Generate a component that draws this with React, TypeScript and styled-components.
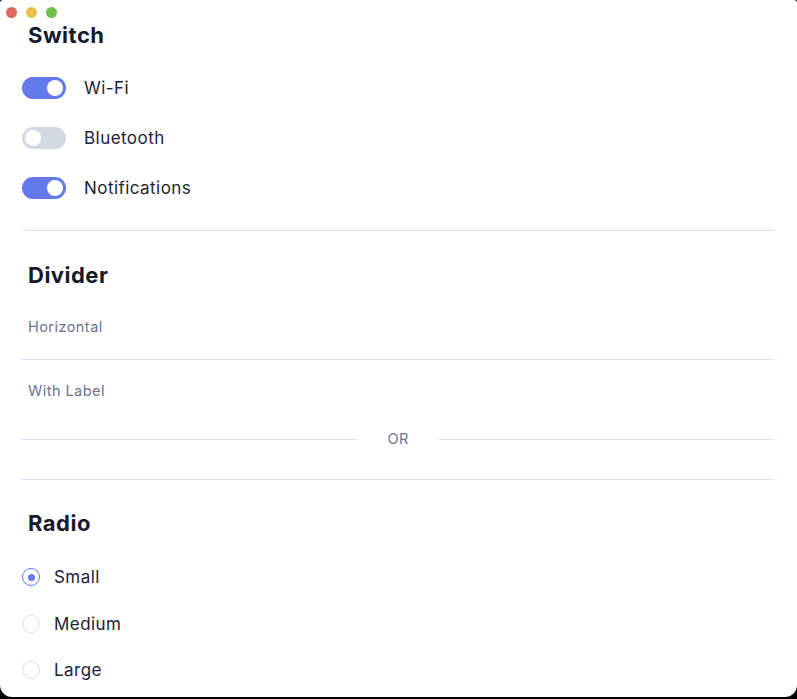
import { useState } from "react";
import styled, { createGlobalStyle } from "styled-components";

const GlobalStyle = createGlobalStyle`
  html, body {
    margin: 0;
    padding: 0;
    background: #000;
  }
  body {
    font-family: Inter, "Noto Sans", "Liberation Sans", sans-serif;
    -webkit-font-smoothing: antialiased;
  }
`;

const Window = styled.div`
  width: 797px;
  height: 697px;
  background: #fff;
  border-radius: 3px 3px 12px 12px;
  overflow: hidden;
  box-sizing: border-box;
`;

const TitleBar = styled.div`
  height: 21px;
  display: flex;
  align-items: center;
  gap: 9px;
  padding: 3px 0 0 6px;
  box-sizing: border-box;
`;

const Light = styled.span<{ $color: string }>`
  width: 11px;
  height: 11px;
  border-radius: 50%;
  background: ${(p) => p.$color};
`;

const Content = styled.div`
  padding: 0 23px 0 22px;
`;

const Section = styled.section`
  display: flex;
  flex-direction: column;
`;

const Heading = styled.h2`
  margin: 0 0 0 6px;
  font-size: 22px;
  line-height: 28px;
  font-weight: 700;
  letter-spacing: 0.5px;
  color: #161a2d;
`;

const SwitchList = styled.div`
  display: flex;
  flex-direction: column;
  gap: 28px;
  margin-top: 28px;
`;

const SwitchRow = styled.label`
  display: flex;
  align-items: center;
  gap: 18px;
  height: 22px;
  cursor: pointer;
`;

const Track = styled.span<{ $on: boolean }>`
  position: relative;
  width: 44px;
  height: 22px;
  border-radius: 11px;
  background: ${(p) => (p.$on ? "#6479ee" : "#d3d8e3")};
  flex-shrink: 0;
`;

const Thumb = styled.span<{ $on: boolean }>`
  position: absolute;
  top: 3px;
  left: ${(p) => (p.$on ? "25px" : "3px")};
  width: 16px;
  height: 16px;
  border-radius: 50%;
  background: #fff;
`;

const Label = styled.span`
  font-size: 17px;
  line-height: 22px;
  letter-spacing: 0.45px;
  color: #1e2233;
`;

const Rule = styled.hr<{ $top: number; $bottom: number }>`
  border: none;
  height: 1px;
  background: #dfdcef;
  margin: ${(p) => p.$top}px 0 ${(p) => p.$bottom}px;
`;

const SubLabel = styled.div<{ $top: number }>`
  margin: ${(p) => p.$top}px 0 0 6px;
  font-size: 14.5px;
  line-height: 20px;
  letter-spacing: 0.45px;
  color: #6b7390;
`;

const LabeledRule = styled.div`
  display: flex;
  align-items: center;
  margin-top: 28px;
  height: 20px;

  &::before,
  &::after {
    content: "";
    flex: 1;
    height: 1px;
    background: #dfdcef;
  }

  span {
    margin: 0 30px;
    font-size: 14.5px;
    line-height: 20px;
    letter-spacing: 0.4px;
    color: #6b7390;
  }
`;

const RadioList = styled.div`
  display: flex;
  flex-direction: column;
  gap: 26.5px;
  margin-top: 30px;
`;

const RadioRow = styled.label`
  display: flex;
  align-items: center;
  gap: 14px;
  height: 20px;
  cursor: pointer;
`;

const RadioDot = styled.span<{ $checked: boolean }>`
  width: 18px;
  height: 18px;
  border-radius: 50%;
  box-sizing: border-box;
  border: 1.5px solid ${(p) => (p.$checked ? "#6479ee" : "#d9dcee")};
  display: flex;
  align-items: center;
  justify-content: center;

  &::after {
    content: "";
    width: 7px;
    height: 7px;
    border-radius: 50%;
    background: ${(p) => (p.$checked ? "#6479ee" : "transparent")};
  }
`;

const switches = ["Wi-Fi", "Bluetooth", "Notifications"];
const sizes = ["Small", "Medium", "Large"];

const App = () => {
  const [enabled, setEnabled] = useState<Record<string, boolean>>({
    "Wi-Fi": true,
    Bluetooth: false,
    Notifications: true,
  });
  const [size, setSize] = useState("Small");

  return (
    <>
      <GlobalStyle />
      <Window>
        <TitleBar>
          <Light $color="#dc6b5b" />
          <Light $color="#e8c14f" />
          <Light $color="#6fc04b" />
        </TitleBar>
        <Content>
          <Section>
            <Heading>Switch</Heading>
            <SwitchList>
              {switches.map((name) => (
                <SwitchRow
                  key={name}
                  onClick={() =>
                    setEnabled((s) => ({ ...s, [name]: !s[name] }))
                  }
                >
                  <Track $on={enabled[name]}>
                    <Thumb $on={enabled[name]} />
                  </Track>
                  <Label>{name}</Label>
                </SwitchRow>
              ))}
            </SwitchList>
          </Section>

          <Rule $top={31} $bottom={30} />

          <Section>
            <Heading>Divider</Heading>
            <SubLabel $top={28}>Horizontal</SubLabel>
            <Rule $top={22} $bottom={0} />
            <SubLabel $top={21}>With Label</SubLabel>
            <LabeledRule>
              <span>OR</span>
            </LabeledRule>
          </Section>

          <Rule $top={30} $bottom={29} />

          <Section>
            <Heading>Radio</Heading>
            <RadioList>
              {sizes.map((s) => (
                <RadioRow key={s} onClick={() => setSize(s)}>
                  <RadioDot $checked={size === s} />
                  <Label>{s}</Label>
                </RadioRow>
              ))}
            </RadioList>
          </Section>
        </Content>
      </Window>
    </>
  );
};

export default App;
